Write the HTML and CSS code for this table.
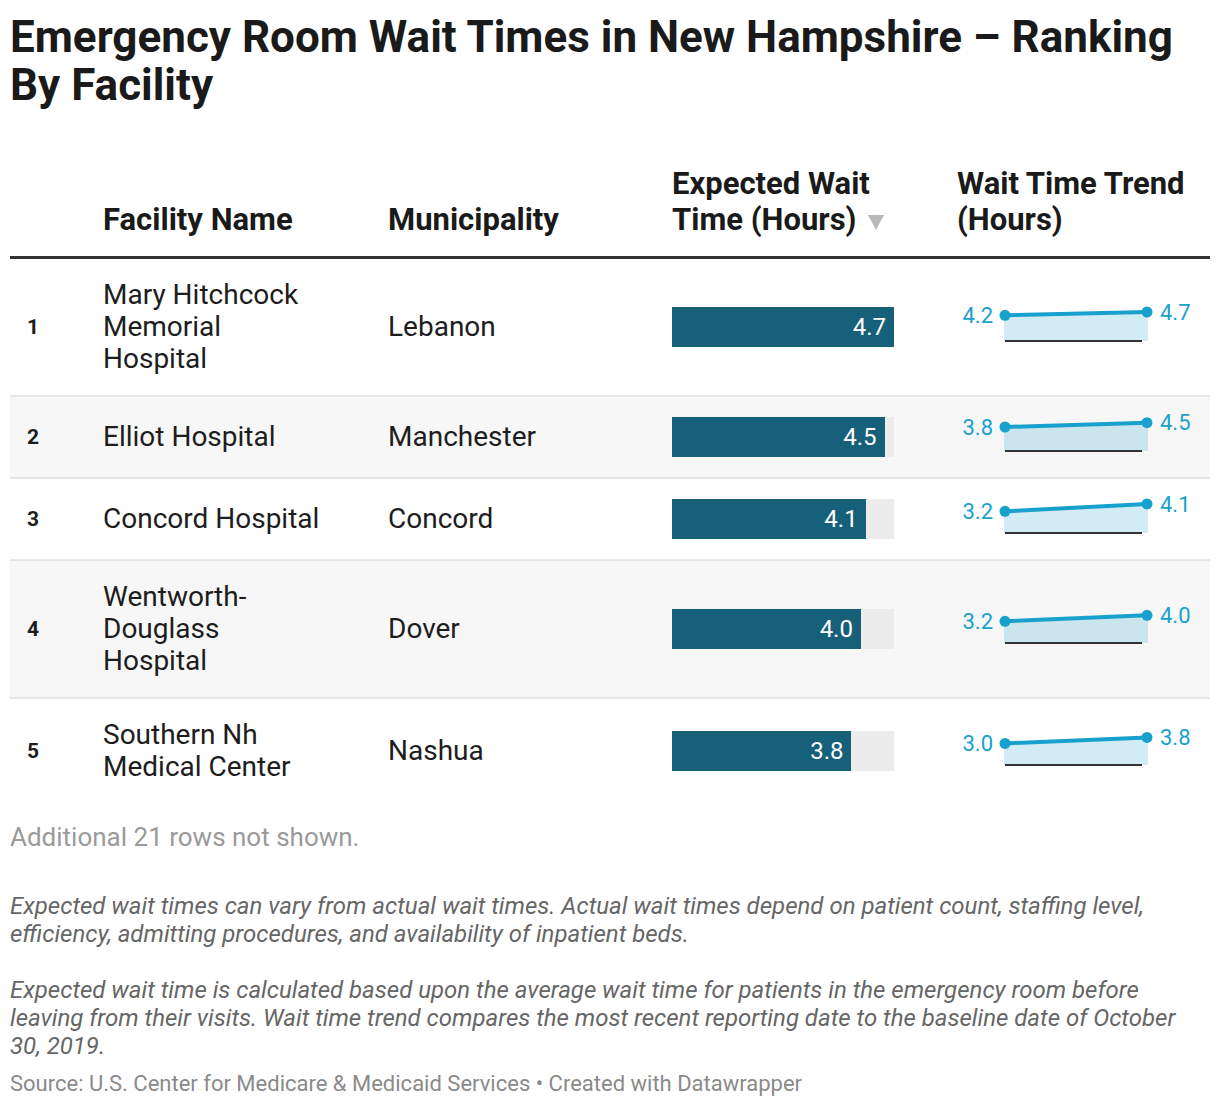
FILE: index.html
```html
<!DOCTYPE html>
<html lang="en">
<head>
<meta charset="utf-8">
<title>Emergency Room Wait Times in New Hampshire</title>
<link rel="stylesheet" href="styles.css">
</head>
<body>
<div class="chart">
  <h1 class="title">Emergency Room Wait Times in New Hampshire – Ranking By Facility</h1>

  <div class="table">
    <div class="thead">
      <div class="th th-rank"></div>
      <div class="th">Facility Name</div>
      <div class="th">Municipality</div>
      <div class="th">Expected Wait Time (Hours)<span class="sort"></span></div>
      <div class="th th-trend">Wait Time Trend (Hours)</div>
    </div>

    <div class="tr">
      <div class="td rank">1</div>
      <div class="td name">Mary Hitchcock Memorial Hospital</div>
      <div class="td muni">Lebanon</div>
      <div class="td"><div class="track"><div class="bar" style="width:100%">4.7</div></div></div>
      <div class="td trend">
        <svg class="spark" viewBox="0 0 253 40" width="253" height="40">
          <polygon class="area" points="47,8.3 191,5 191,34 47,34"/>
          <line class="base" x1="48" y1="34" x2="185" y2="34"/>
          <line class="line" x1="48" y1="8.3" x2="190" y2="5"/>
          <circle class="dot" cx="48" cy="8.3" r="5.5"/>
          <circle class="dot" cx="190" cy="5" r="5.5"/>
          <text class="lbl" x="36" y="8.3" text-anchor="end" dominant-baseline="central">4.2</text>
          <text class="lbl" x="203" y="5" dominant-baseline="central">4.7</text>
        </svg>
      </div>
    </div>

    <div class="tr">
      <div class="td rank">2</div>
      <div class="td name">Elliot Hospital</div>
      <div class="td muni">Manchester</div>
      <div class="td"><div class="track"><div class="bar" style="width:95.74%">4.5</div></div></div>
      <div class="td trend">
        <svg class="spark" viewBox="0 0 253 40" width="253" height="40">
          <polygon class="area" points="47,10 191,5.7 191,34 47,34"/>
          <line class="base" x1="48" y1="34" x2="185" y2="34"/>
          <line class="line" x1="48" y1="10" x2="190" y2="5.7"/>
          <circle class="dot" cx="48" cy="10" r="5.5"/>
          <circle class="dot" cx="190" cy="5.7" r="5.5"/>
          <text class="lbl" x="36" y="10" text-anchor="end" dominant-baseline="central">3.8</text>
          <text class="lbl" x="203" y="5.7" dominant-baseline="central">4.5</text>
        </svg>
      </div>
    </div>

    <div class="tr">
      <div class="td rank">3</div>
      <div class="td name">Concord Hospital</div>
      <div class="td muni">Concord</div>
      <div class="td"><div class="track"><div class="bar" style="width:87.23%">4.1</div></div></div>
      <div class="td trend">
        <svg class="spark" viewBox="0 0 253 40" width="253" height="40">
          <polygon class="area" points="47,12.3 191,5 191,34 47,34"/>
          <line class="base" x1="48" y1="34" x2="185" y2="34"/>
          <line class="line" x1="48" y1="12.3" x2="190" y2="5"/>
          <circle class="dot" cx="48" cy="12.3" r="5.5"/>
          <circle class="dot" cx="190" cy="5" r="5.5"/>
          <text class="lbl" x="36" y="12.3" text-anchor="end" dominant-baseline="central">3.2</text>
          <text class="lbl" x="203" y="5" dominant-baseline="central">4.1</text>
        </svg>
      </div>
    </div>

    <div class="tr">
      <div class="td rank">4</div>
      <div class="td name">Wentworth-Douglass Hospital</div>
      <div class="td muni">Dover</div>
      <div class="td"><div class="track"><div class="bar" style="width:85.11%">4.0</div></div></div>
      <div class="td trend">
        <svg class="spark" viewBox="0 0 253 40" width="253" height="40">
          <polygon class="area" points="47,12.3 191,6.3 191,34 47,34"/>
          <line class="base" x1="48" y1="34" x2="185" y2="34"/>
          <line class="line" x1="48" y1="12.3" x2="190" y2="6.3"/>
          <circle class="dot" cx="48" cy="12.3" r="5.5"/>
          <circle class="dot" cx="190" cy="6.3" r="5.5"/>
          <text class="lbl" x="36" y="12.3" text-anchor="end" dominant-baseline="central">3.2</text>
          <text class="lbl" x="203" y="6.3" dominant-baseline="central">4.0</text>
        </svg>
      </div>
    </div>

    <div class="tr">
      <div class="td rank">5</div>
      <div class="td name">Southern Nh Medical Center</div>
      <div class="td muni">Nashua</div>
      <div class="td"><div class="track"><div class="bar" style="width:80.85%">3.8</div></div></div>
      <div class="td trend">
        <svg class="spark" viewBox="0 0 253 40" width="253" height="40">
          <polygon class="area" points="47,12.4 191,6.4 191,34 47,34"/>
          <line class="base" x1="48" y1="34" x2="185" y2="34"/>
          <line class="line" x1="48" y1="12.4" x2="190" y2="6.4"/>
          <circle class="dot" cx="48" cy="12.4" r="5.5"/>
          <circle class="dot" cx="190" cy="6.4" r="5.5"/>
          <text class="lbl" x="36" y="12.4" text-anchor="end" dominant-baseline="central">3.0</text>
          <text class="lbl" x="203" y="6.4" dominant-baseline="central">3.8</text>
        </svg>
      </div>
    </div>
  </div>

  <div class="more">Additional 21 rows not shown.</div>

  <div class="notes">
    <p>Expected wait times can vary from actual wait times. Actual wait times depend on patient count, staffing level, efficiency, admitting procedures, and availability of inpatient beds.</p>
    <p>Expected wait time is calculated based upon the average wait time for patients in the emergency room before leaving from their visits. Wait time trend compares the most recent reporting date to the baseline date of October 30, 2019.</p>
  </div>

  <div class="source">Source: U.S. Center for Medicare &amp; Medicaid Services • Created with Datawrapper</div>
</div>
</body>
</html>
```

FILE: styles.css
```css
html, body {
  margin: 0;
  padding: 0;
  background: #ffffff;
}

body {
  font-family: Roboto, "Liberation Sans", sans-serif;
  color: #1d1d1d;
}

.chart {
  padding: 0 10px;
}

.title {
  margin: 13px 0 0;
  font-size: 44px;
  line-height: 48px;
  font-weight: 700;
  color: #1a1a1a;
}

.thead,
.tr {
  display: grid;
  grid-template-columns: 93px 285px 284px 285px 1fr;
}

.thead {
  margin-top: 57px;
  padding-bottom: 18px;
  border-bottom: 3px solid #333333;
  align-items: end;
}

.th {
  font-size: 31px;
  line-height: 36px;
  font-weight: 700;
  color: #1a1a1a;
  padding-right: 63px;
}

.th-trend {
  padding-right: 20px;
}

.sort {
  display: inline-block;
  width: 0;
  height: 0;
  margin-left: 12px;
  border-left: 8px solid transparent;
  border-right: 8px solid transparent;
  border-top: 15px solid #b8b8b8;
  vertical-align: 0;
}

.tr {
  align-items: center;
  padding: 20px 0;
  border-bottom: 2px solid #e6e6e6;
}

.tr:nth-child(odd) {
  background: #f7f7f7;
}

.tr:last-child {
  border-bottom: none;
}

.td {
  font-size: 28px;
  line-height: 32px;
  padding-right: 63px;
}

.td.trend {
  padding-right: 0;
}

.rank {
  font-size: 21px;
  font-weight: 700;
  padding-left: 17px;
  color: #1d1d1d;
}

.track {
  width: 222px;
  height: 40px;
  background: #ececec;
}

.bar {
  height: 100%;
  background: #176079;
  color: #ffffff;
  font-size: 24px;
  display: flex;
  align-items: center;
  justify-content: flex-end;
  padding-right: 8px;
  box-sizing: border-box;
}

.spark {
  display: block;
  overflow: visible;
}

.spark .area {
  fill: rgba(24, 161, 205, 0.2);
}

.spark .base {
  stroke: #333333;
  stroke-width: 2;
}

.spark .line {
  stroke: #18a1cd;
  stroke-width: 4;
}

.spark .dot {
  fill: #18a1cd;
}

.spark .lbl {
  font-family: Roboto, "Liberation Sans", sans-serif;
  font-size: 22px;
  fill: #18a1cd;
}

.more {
  margin-top: 18px;
  font-size: 26px;
  line-height: 32px;
  color: #9a9a9a;
}

.notes {
  margin-top: 39px;
  font-size: 24px;
  line-height: 28px;
  font-style: italic;
  color: #666666;
}

.notes p {
  margin: 0 0 28px;
}

.notes p:last-child {
  margin-bottom: 0;
}

.source {
  margin-top: 11px;
  font-size: 22px;
  line-height: 26px;
  color: #8a8a8a;
}
```
